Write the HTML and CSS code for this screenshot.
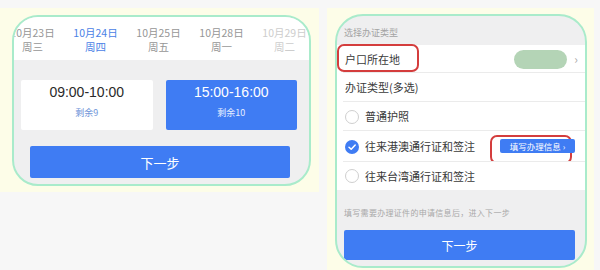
FILE: index.html
```html
<!DOCTYPE html>
<html>
<head>
<meta charset="utf-8">
<link rel="stylesheet" href="styles.css">
</head>
<body>
<div class="page">
  <section class="panel panel-left">
    <div class="frame frame-left">
      <div class="dates">
        <div class="date"><span>10月23日</span><span>周三</span></div>
        <div class="date active"><span>10月24日</span><span>周四</span></div>
        <div class="date"><span>10月25日</span><span>周五</span></div>
        <div class="date"><span>10月28日</span><span>周一</span></div>
        <div class="date faded"><span>10月29日</span><span>周二</span></div>
      </div>
      <div class="slots-area">
        <div class="slots">
          <div class="slot"><div class="slot-time">09:00-10:00</div><div class="slot-left">剩余9</div></div>
          <div class="slot selected"><div class="slot-time">15:00-16:00</div><div class="slot-left">剩余10</div></div>
        </div>
        <div class="btn btn-left">下一步</div>
      </div>
    </div>
  </section>
  <section class="panel panel-right">
    <div class="frame frame-right">
      <div class="section-title">选择办证类型</div>
      <div class="row row-place">
        <span class="row-label">户口所在地</span>
        <span class="place-value"></span>
        <span class="chev">›</span>
        <span class="mark mark-place"></span>
      </div>
      <div class="row"><span class="row-label">办证类型(多选)</span></div>
      <div class="row opt"><span class="radio"></span><span class="row-label">普通护照</span></div>
      <div class="row opt row-tall">
        <span class="radio checked"><svg viewBox="0 0 14 14" width="14" height="14"><path d="M4 7.2 L6.2 9.3 L10.2 5" fill="none" stroke="#fff" stroke-width="1.5" stroke-linecap="round" stroke-linejoin="round"/></svg></span>
        <span class="row-label">往来港澳通行证和签注</span>
        <span class="fill-btn">填写办理信息 ›</span>
        <span class="mark mark-fill"></span>
      </div>
      <div class="row opt last"><span class="radio"></span><span class="row-label">往来台湾通行证和签注</span></div>
      <div class="hint">填写需要办理证件的申请信息后，进入下一步</div>
      <div class="btn btn-right">下一步</div>
    </div>
  </section>
</div>
</body>
</html>
```

FILE: styles.css
```css
* { box-sizing: border-box; }
html, body { margin: 0; padding: 0; }
body {
  background: #f7f7f7;
  font-family: "Noto Sans CJK SC", "Liberation Sans", sans-serif;
  width: 600px;
  height: 270px;
  overflow: hidden;
}
.page {
  display: flex;
  gap: 8px;
  padding-top: 8px;
  align-items: flex-start;
}
.panel {
  background: #fdfde8;
  display: flex;
}
.panel-left {
  width: 319px;
  height: 184px;
  padding: 7px 8px 6px 12px;
}
.panel-right {
  width: 267px;
  height: 270px;
  padding: 6px 7px 0 8px;
}
.frame {
  border: 2px solid #a9ebcb;
  overflow: hidden;
  background: #efeff0;
  flex: 1;
  display: flex;
  flex-direction: column;
}
.frame-left {
  border-radius: 26px;
  height: 171px;
}
.frame-right {
  border-radius: 28px;
  height: 254px;
}

/* left */
.dates {
  background: #fff;
  height: 43px;
  display: flex;
  margin-left: -13px;
  padding-top: 9px;
  flex-shrink: 0;
}
.date {
  width: 63px;
  flex-shrink: 0;
  display: flex;
  flex-direction: column;
  align-items: center;
  font-size: 10.5px;
  line-height: 14px;
  color: #969696;
}
.date span { display: block; height: 14px; }
.date.active { color: #4b82e6; }
.date.faded { color: #cdcdcd; }
.slots-area {
  padding: 20px 12px 0 7px;
}
.slots {
  display: flex;
  gap: 13px;
}
.slot {
  flex: 1;
  height: 50px;
  background: #fff;
  border-radius: 2px;
  display: flex;
  flex-direction: column;
  align-items: center;
  padding-top: 4px;
}
.slot-time {
  font-family: "Liberation Sans", sans-serif;
  font-size: 14px;
  line-height: 17px;
  color: #2a2a2a;
}
.slot-left {
  font-size: 9px;
  line-height: 12px;
  margin-top: 6px;
  color: #6f95d8;
}
.slot.selected { background: #3f7cf3; }
.slot.selected .slot-time { color: #fff; }
.slot.selected .slot-left { color: #e6eeff; }
.btn {
  background: #3f7cf3;
  color: #fff;
  border-radius: 2px;
  display: flex;
  align-items: center;
  justify-content: center;
  font-size: 13px;
}
.btn-left {
  margin: 16px 0 0 9px;
  width: 260px;
  height: 32px;
}

/* right */
.section-title {
  height: 29px;
  font-size: 9px;
  color: #a3a3a3;
  padding: 11px 0 0 7px;
  line-height: 12px;
  flex-shrink: 0;
}
.row {
  position: relative;
  background: #fff;
  height: 29px;
  display: flex;
  align-items: center;
  padding-left: 8px;
  flex-shrink: 0;
}
.row::after {
  content: "";
  position: absolute;
  left: 6px;
  right: 0;
  bottom: 0;
  height: 1px;
  background: #ebebeb;
}
.row.last::after { display: none; }
.row-place { height: 28px; }
.row-tall { height: 31px; }
.row.last { height: 28px; }
.row-label {
  font-size: 11px;
  color: #3a3a3a;
  line-height: 15px;
}
.place-value {
  margin-left: auto;
  width: 53px;
  height: 19px;
  border-radius: 10px;
  background: #b4d4b6;
}
.chev {
  width: 18px;
  text-align: center;
  color: #aaa;
  font-size: 12px;
  line-height: 12px;
}
.mark {
  position: absolute;
  border: 2px solid #d43d3d;
  border-radius: 7px;
}
.mark-place {
  left: 0;
  top: -1px;
  width: 82px;
  height: 28px;
}
.mark-fill {
  left: 153px;
  top: 4px;
  width: 82px;
  height: 29px;
}
.opt .row-label { margin-left: 6px; }
.radio {
  width: 14px;
  height: 14px;
  border-radius: 50%;
  border: 1px solid #cfcfcf;
  background: #fff;
  flex-shrink: 0;
  display: flex;
}
.radio.checked {
  border: none;
  background: #3f7cf3;
}
.fill-btn {
  position: absolute;
  left: 163px;
  top: 8px;
  width: 75px;
  height: 14px;
  background: #3f7cf3;
  color: #fff;
  font-size: 8.5px;
  line-height: 14px;
  border-radius: 2px;
  text-align: center;
  z-index: 1;
}
.hint {
  margin-top: 17px;
  padding-left: 7px;
  font-size: 8px;
  letter-spacing: 0.3px;
  line-height: 11px;
  color: #a8a8a8;
}
.btn-right {
  margin: 12px 0 0 7px;
  width: 231px;
  height: 30px;
  font-size: 12px;
}
```
